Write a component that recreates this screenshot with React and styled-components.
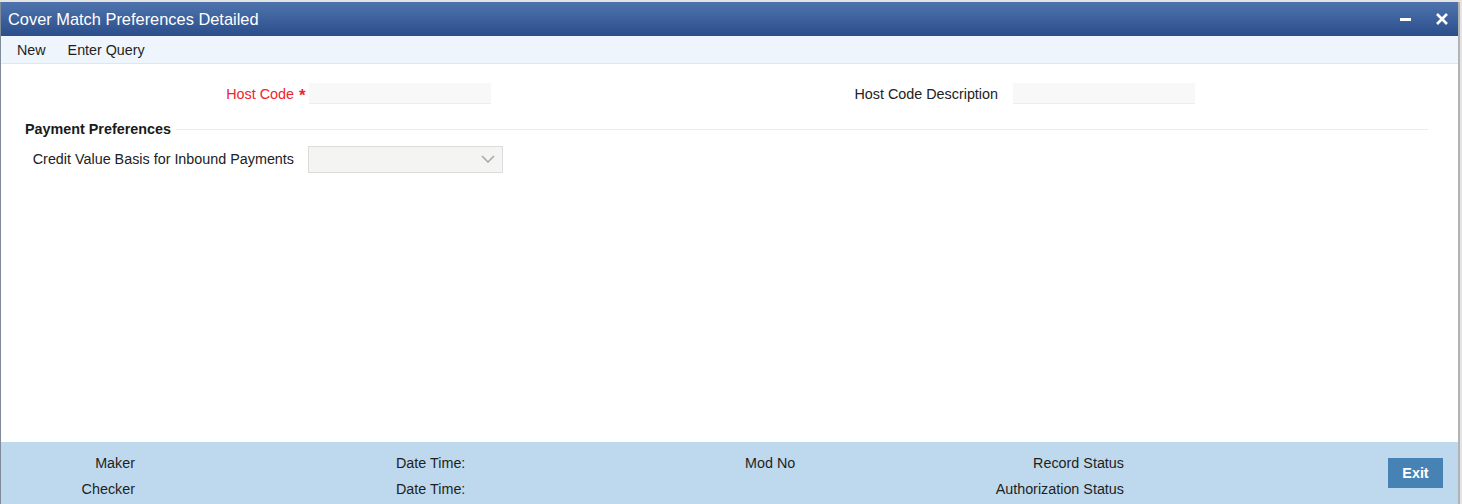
import styled, { createGlobalStyle } from "styled-components";

const GlobalStyle = createGlobalStyle`
  html, body {
    margin: 0;
    padding: 0;
    height: 100%;
    background: #e4e4e4;
    font-family: "Liberation Sans", Arial, sans-serif;
  }
  #root {
    height: 100%;
  }
`;

const Window = styled.div`
  display: flex;
  flex-direction: column;
  box-sizing: border-box;
  width: 1460px;
  height: calc(100vh - 2px);
  margin-top: 2px;
  background: #ffffff;
  border-left: 1px solid #7f8b98;
  border-right: 2px solid #b3b3b3;
  overflow: hidden;
`;

const TitleBar = styled.div`
  display: flex;
  align-items: center;
  justify-content: space-between;
  height: 34px;
  padding: 0 8px 0 7px;
  background: linear-gradient(to bottom, #4f74ad, #2b4e8b);
  color: #ffffff;
`;

const Title = styled.h1`
  margin: 0;
  font-size: 16.4px;
  font-weight: 400;
`;

const WindowControls = styled.div`
  display: flex;
  align-items: center;
  gap: 20px;
`;

const ControlButton = styled.button`
  display: flex;
  align-items: center;
  justify-content: center;
  width: 16px;
  height: 16px;
  padding: 0;
  border: 0;
  background: none;
  cursor: pointer;
`;

const Toolbar = styled.div`
  display: flex;
  align-items: center;
  gap: 22px;
  height: 27px;
  padding: 0 16px;
  background: #eef5fd;
  border-bottom: 1px solid #dfe6ee;
`;

const ToolbarItem = styled.span`
  font-size: 14.3px;
  color: #1f1f1f;
  cursor: pointer;
`;

const Content = styled.div`
  flex: 1;
  padding: 19px 25px 0 24px;
`;

const FieldGrid = styled.div`
  display: grid;
  grid-template-columns: 704px 704px;
`;

const Field = styled.div`
  display: flex;
  align-items: center;
  height: ${(p) => (p.$tall ? "26px" : "21px")};
`;

const Label = styled.label`
  width: 270px;
  padding-right: 1px;
  box-sizing: border-box;
  text-align: right;
  font-size: 14.35px;
  color: ${(p) => (p.$required ? "#f0232d" : "#222222")};
  white-space: nowrap;
`;

const Marker = styled.span`
  width: 14px;
  padding-left: 4px;
  box-sizing: border-box;
  font-size: 17px;
  font-weight: 700;
  line-height: 17px;
  color: #f0232d;
  margin-top: 3px;
`;

const TextInput = styled.input`
  box-sizing: border-box;
  width: 182px;
  height: 21px;
  padding: 0 4px;
  border: 0;
  border-bottom: 1px solid #ececec;
  background: #f8f8f8;
  font-family: inherit;
  font-size: 14px;
  outline: none;
`;

const Section = styled.div`
  display: flex;
  align-items: center;
  gap: 5px;
  margin: 17px 5px 9px 0;
`;

const SectionTitle = styled.h2`
  margin: 0;
  font-size: 14.35px;
  font-weight: 700;
  color: #1a1a1a;
`;

const SectionLine = styled.div`
  flex: 1;
  height: 1px;
  background: #ebebeb;
`;

const SelectBox = styled.div`
  display: flex;
  align-items: center;
  justify-content: flex-end;
  box-sizing: border-box;
  width: 195px;
  height: 27px;
  margin-left: -1px;
  padding-right: 7px;
  background: #f4f4f2;
  border: 1px solid #dcdcdc;
`;

const Footer = styled.div`
  display: flex;
  align-items: flex-start;
  height: 62px;
  box-sizing: border-box;
  padding: 8px 15px 0 1px;
  background: #bed9ed;
`;

const AuditGrid = styled.div`
  display: grid;
  grid-template-columns: 133px 261px 349px 130px 249px;
  grid-auto-rows: 26px;
  align-items: center;
  font-size: 14.35px;
  color: #1f1f1f;
`;

const AuditCell = styled.span`
  text-align: ${(p) => (p.$right ? "right" : "left")};
  white-space: nowrap;
`;

const ExitButton = styled.button`
  align-self: center;
  margin-left: auto;
  margin-top: -8px;
  width: 55px;
  height: 30px;
  border: 0;
  background: #4682b4;
  color: #ffffff;
  font-family: inherit;
  font-size: 14.35px;
  font-weight: 700;
  cursor: pointer;
`;

function Chevron() {
  return (
    <svg width="14" height="8" viewBox="0 0 14 8">
      <path d="M1 1l6 6 6-6" fill="none" stroke="#a9a9a9" strokeWidth="1.6" />
    </svg>
  );
}

export default function App() {
  return (
    <>
      <GlobalStyle />
      <Window>
        <TitleBar>
          <Title>Cover Match Preferences Detailed</Title>
          <WindowControls>
            <ControlButton aria-label="Minimize">
              <svg width="12" height="12" viewBox="0 0 12 12">
                <rect x="0" y="5" width="11" height="3" fill="#ffffff" />
              </svg>
            </ControlButton>
            <ControlButton aria-label="Close">
              <svg width="14" height="14" viewBox="0 0 14 14">
                <path
                  d="M2 2l10 10M12 2L2 12"
                  stroke="#ffffff"
                  strokeWidth="2.6"
                  fill="none"
                />
              </svg>
            </ControlButton>
          </WindowControls>
        </TitleBar>

        <Toolbar>
          <ToolbarItem>New</ToolbarItem>
          <ToolbarItem>Enter Query</ToolbarItem>
        </Toolbar>

        <Content>
          <FieldGrid>
            <Field>
              <Label $required>Host Code</Label>
              <Marker>*</Marker>
              <TextInput />
            </Field>
            <Field>
              <Label>Host Code Description</Label>
              <Marker />
              <TextInput />
            </Field>
          </FieldGrid>

          <Section>
            <SectionTitle>Payment Preferences</SectionTitle>
            <SectionLine />
          </Section>

          <Field $tall>
            <Label>Credit Value Basis for Inbound Payments</Label>
            <Marker />
            <SelectBox>
              <Chevron />
            </SelectBox>
          </Field>
        </Content>

        <Footer>
          <AuditGrid>
            <AuditCell $right>Maker</AuditCell>
            <span />
            <AuditCell>Date Time:</AuditCell>
            <AuditCell>Mod No</AuditCell>
            <AuditCell $right>Record Status</AuditCell>
            <AuditCell $right>Checker</AuditCell>
            <span />
            <AuditCell>Date Time:</AuditCell>
            <span />
            <AuditCell $right>Authorization Status</AuditCell>
          </AuditGrid>
          <ExitButton>Exit</ExitButton>
        </Footer>
      </Window>
    </>
  );
}
